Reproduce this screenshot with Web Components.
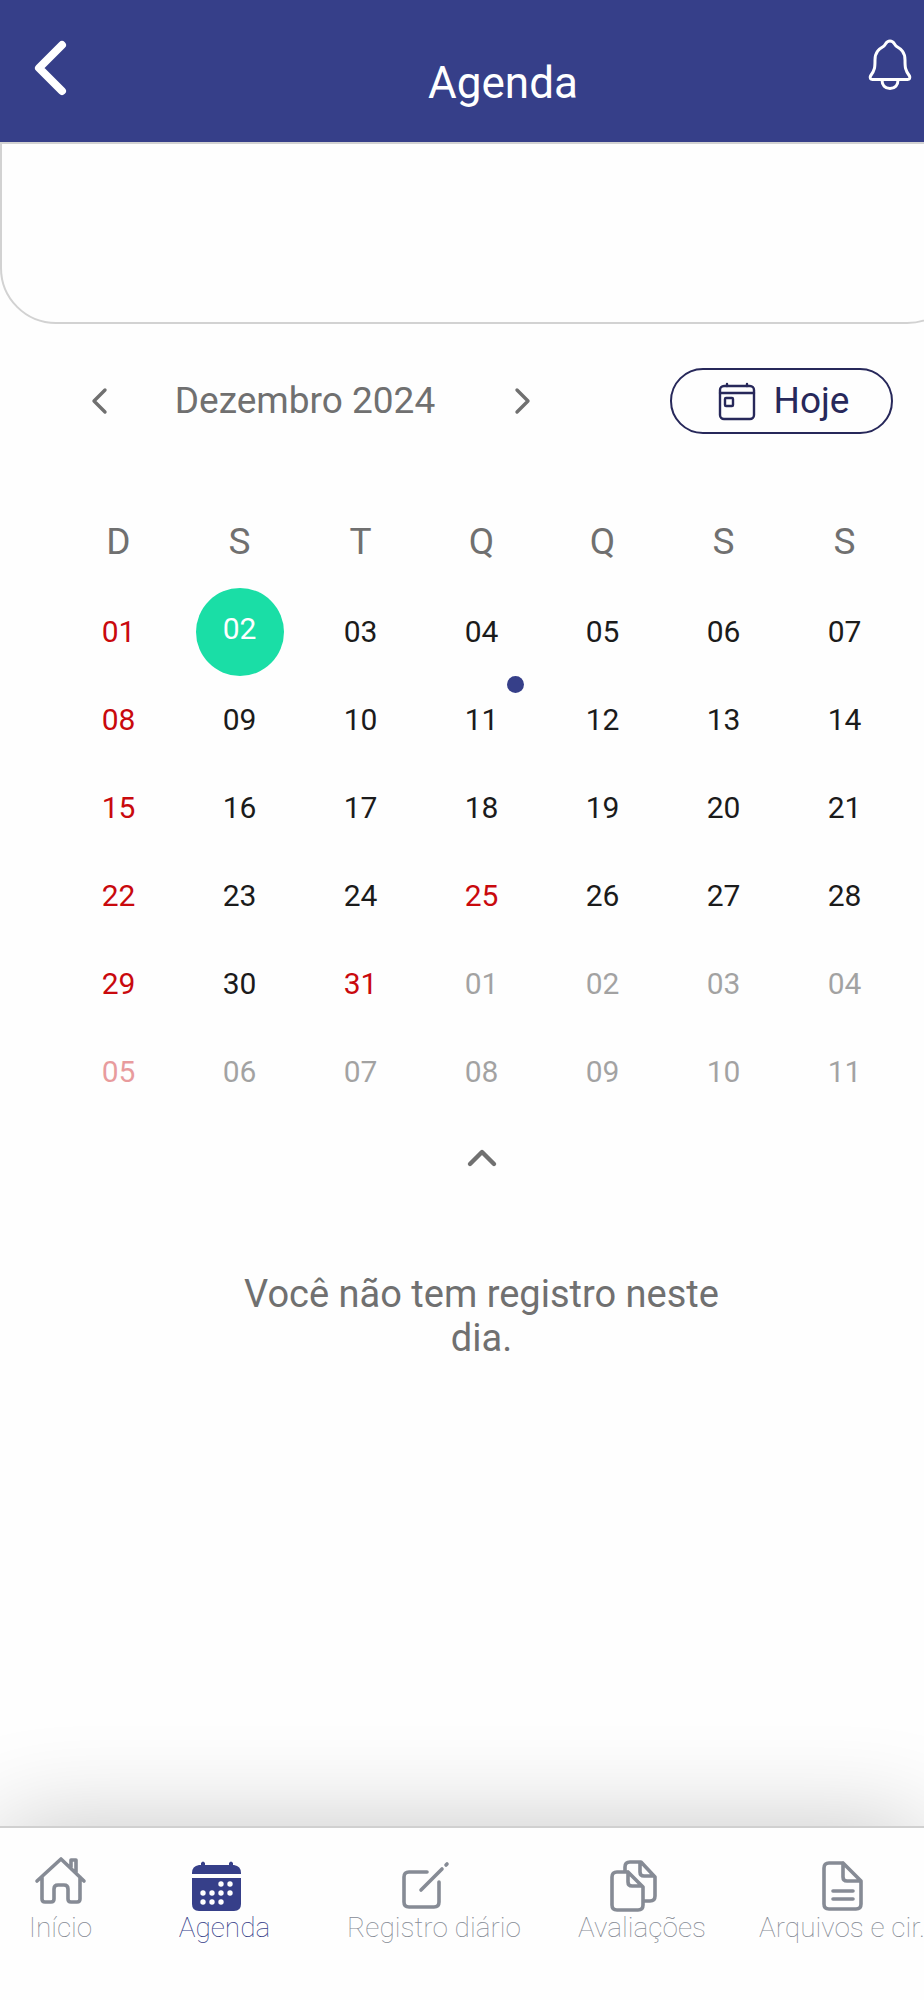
<!DOCTYPE html>
<html lang="pt-BR">
<head>
<meta charset="utf-8">
<meta name="viewport" content="width=device-width, initial-scale=1">
<title>Agenda</title>
<style>
  body { margin: 0; background: #fefefe; font-family: Roboto, "Liberation Sans", sans-serif; --brand: #363f89; --grey: #707070; --navy: #27285a; }
</style>
</head>
<body>
<agenda-app></agenda-app>
<script>
class Base extends HTMLElement {
  connectedCallback() {
    if (!this.shadowRoot) this.attachShadow({ mode: 'open' }).innerHTML =
      `<style>*{box-sizing:border-box}svg{display:block;overflow:visible;fill:none;stroke:currentColor;stroke-linecap:round;stroke-linejoin:round}button{border:0;background:none;padding:0;margin:0;font:inherit;color:inherit;cursor:pointer}</style>` + this.html();
  }
}

customElements.define('app-header', class extends Base {
  html() { return `
<style>
  :host { display: block; }
  header { display: flex; align-items: flex-start; min-height: 142px; padding-top: 36px; background: var(--brand); color: #fff; }
  .back { width: 138px; height: 60px; padding-left: 30px; }
  .bell { width: 56px; height: 60px; }
  h1 { flex: 1; margin: 20px 0 0; text-align: center; font-size: 44px; line-height: 54px; font-weight: 400; }
</style>
<header>
  <button class="back" aria-label="Voltar"><svg width="40" height="60" stroke-width="8"><path d="M32 9 9 32l23 23"/></svg></button>
  <h1><slot></slot></h1>
  <button class="bell" aria-label="Notificações"><svg width="56" height="60" stroke-width="3"><path d="M22 5c-4 0-4 3-6 5-5 3-9 6-9 14 0 7 0 10-4.500 16-1 2 0 3.500 2 3.500h35c2 0 3-1.500 2-3.500-4.500-6-4.500-9-4.500-16 0-8-4-11-9-14-2-2-2-5-6-5zM14 44c0 5 3 8.500 8 8.500s8-3.500 8-8.500"/></svg></button>
</header>`; }
});

customElements.define('blank-card', class extends Base {
  html() { return `
<style>
  :host { display: block; min-height: 182px; box-sizing: border-box; border: 2px solid #d2d2d2; border-radius: 0 0 56px 56px; background: #fefefe; }
</style><slot></slot>`; }
});

customElements.define('month-bar', class extends Base {
  html() { return `
<style>
  :host { display: flex; align-items: center; margin: 44px 70px 0 76px; color: var(--grey); font-size: 37px; line-height: 44px; }
  .arrow { width: 44px; height: 44px; display: grid; place-items: center; }
  h2 { margin: 0; width: 380px; padding-right: 10px; text-align: center; font-size: inherit; font-weight: 400; }
  .today { margin-left: auto; width: 223px; height: 66px; border: 2px solid var(--navy); border-radius: 33px; color: var(--navy); display: flex; align-items: center; justify-content: center; gap: 18px; padding-left: 2px; }
</style>
<button class="arrow" aria-label="Mês anterior"><svg width="20" height="28" stroke-width="3.4"><path d="M17 3 6 14l11 11"/></svg></button>
<h2><slot></slot></h2>
<button class="arrow" aria-label="Próximo mês"><svg width="20" height="28" stroke-width="3.4"><path d="M5 3l11 11L5 25"/></svg></button>
<button class="today"><svg width="40" height="40" stroke-width="2.4"><rect x="4" y="5" width="34" height="33" rx="4"/><path d="M4 12h34M11 3v2M31 3v2"/><rect x="9" y="17" width="8" height="8" rx="1"/></svg>Hoje</button>`; }
});

customElements.define('month-grid', class extends Base {
  html() {
    const red = new Set([0, 7, 14, 21, 28, 24, 30, 35]);
    let rows = '';
    for (let r = 0; r < 6; r++) {
      rows += '<tr>';
      for (let c = 0; c < 7; c++) {
        const i = r * 7 + c, d = String(i < 31 ? i + 1 : i - 30).padStart(2, '0');
        const cls = [red.has(i) && 'red', i > 30 && 'out', i === 1 && 'sel', i === 10 && 'event'].filter(Boolean).join(' ');
        rows += `<td><button class="${cls}"${i === 1 ? ' aria-pressed="true"' : ''}>${d}</button></td>`;
      }
      rows += '</tr>';
    }
    return `
<style>
  :host { display: block; margin: 64px 58px 0; }
  table { width: 100%; table-layout: fixed; border-collapse: collapse; }
  th { height: 90px; padding: 0 0 3px; font-size: 37px; line-height: 44px; font-weight: 400; color: var(--grey); }
  td { height: 88px; padding: 0; text-align: center; font-size: 30px; line-height: 36px; color: #1b1b1b; }
  td button { position: relative; width: 88px; height: 88px; display: block; margin: 0 auto; border-radius: 50%; }
  .red { color: #c9090d; }
  .out { opacity: .4; }
  .sel { background: #1adea6; color: #fff; padding-bottom: 6px; }
  .event::after { content: ""; position: absolute; top: 0; right: 2px; width: 17px; height: 17px; border-radius: 50%; background: var(--brand); }
</style>
<table><thead><tr>${[...'DSTQQSS'].map(x => `<th scope="col">${x}</th>`).join('')}</tr></thead><tbody>${rows}</tbody></table>`;
  }
});

customElements.define('day-records', class extends Base {
  html() { return `
<style>
  :host { display: flex; flex-direction: column; align-items: center; color: var(--grey); }
  button { width: 60px; height: 60px; margin-top: 12px; display: grid; place-items: center; }
  p { margin: 84px 0 0; width: 520px; text-align: center; font-size: 38px; line-height: 44px; }
</style>
<button aria-label="Recolher calendário"><svg width="36" height="24" stroke-width="4.4"><path d="M6 18 18 6l12 12"/></svg></button>
<p><slot></slot></p>`; }
});

const icons = {
  home: '<path d="M7 28 31 6l23 22M12 24v22q0 3 3 3h6q3 0 3-3V36q0-4 4-4h6q4 0 4 4v10q0 3 3 3h6q3 0 3-3V24M41 14V7h5v12"/>',
  calendar: '<g fill="currentColor" stroke="none"><path d="M0 19v-1q0-7 7-8h2V8q2-3 4 0v2h24V8q2-3 4 0v2h1q7 1 7 8v1zM0 23h49v26q0 7-7 7H7q-7 0-7-7z"/></g><g fill="#fff" stroke="none"><circle cx="29" cy="29" r="2.7"/><circle cx="38" cy="29" r="2.7"/><circle cx="11" cy="38" r="2.7"/><circle cx="20" cy="38" r="2.7"/><circle cx="29" cy="38" r="2.7"/><circle cx="38" cy="38" r="2.7"/><circle cx="11" cy="47" r="2.7"/><circle cx="20" cy="47" r="2.7"/><circle cx="29" cy="47" r="2.7"/></g>',
  edit: '<path d="M25 17H7q-5 0-5 5v25q0 5 5 5h25q5 0 5-5V27M19 35l21-21M44 10l1-1"/>',
  copy: '<path d="M18 17H7q-5 0-5 5v28q0 5 5 5h21q5 0 5-5V32L18 17v10q0 4 4 4h10M15 17v-5q0-5 5-5h11l14 15v19q0 5-5 5h-6M30 7v10q0 4 4 4h10"/>',
  file: '<path d="M22 8H8q-5 0-5 5v36q0 5 5 5h27q5 0 5-5V26L22 8v14q0 4 4 4h14M12 36h20M12 44h20"/>'
};
customElements.define('nav-item', class extends Base {
  html() {
    const icon = this.getAttribute('icon');
    const w = { home: 61, calendar: 66, edit: 64, copy: 64, file: 43 }[icon];
    const top = icon === 'home' ? 0 : -2;
    return `
<style>
  :host { display: block; min-width: 0; color: #868b95; }
  :host([active]) { color: var(--brand); }
  a { display: flex; flex-direction: column; align-items: center; padding-top: 25px; color: inherit; text-decoration: none; white-space: nowrap; font-size: 28px; line-height: 34px; font-weight: 100; }
</style>
<a href="#"><svg width="${w}" height="58" viewBox="0 ${top} ${w} 58" stroke-width="3.6" aria-hidden="true">${icons[icon]}</svg><slot></slot></a>`;
  }
});

customElements.define('bottom-nav', class extends Base {
  html() { return `
<style>
  :host { display: block; box-shadow: 0 0 100px rgba(0,0,0,.22); background: #fefefe; }
  nav { min-height: 174px; border-top: 2px solid #d0d0d0; display: grid; grid-template-columns: 121fr 207fr 212fr 204fr 196fr; margin-right: -16px; }
</style>
<nav aria-label="Principal"><slot></slot></nav>`; }
});

customElements.define('agenda-app', class extends Base {
  html() { return `
<style>
  :host { display: flex; flex-direction: column; min-height: 100vh; overflow: hidden; }
  main { flex: 1; margin-right: -39px; }
</style>
<app-header>Agenda</app-header>
<main>
  <blank-card></blank-card>
  <month-bar>Dezembro 2024</month-bar>
  <month-grid></month-grid>
  <day-records>Você não tem registro neste dia.</day-records>
</main>
<bottom-nav>
  <nav-item icon="home">Início</nav-item>
  <nav-item icon="calendar" active>Agenda</nav-item>
  <nav-item icon="edit">Registro diário</nav-item>
  <nav-item icon="copy">Avaliações</nav-item>
  <nav-item icon="file">Arquivos e cir.</nav-item>
</bottom-nav>`; }
});
</script>
</body>
</html>
